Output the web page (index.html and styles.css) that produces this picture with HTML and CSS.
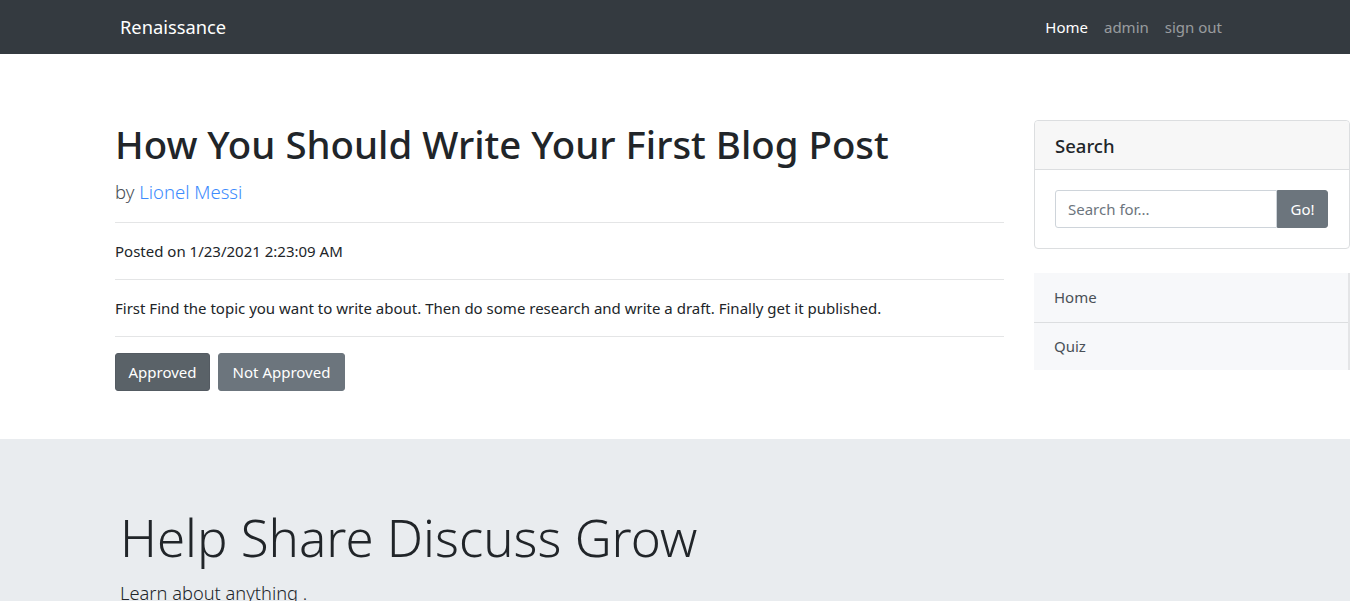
FILE: index.html
```html
<!DOCTYPE html>
<html lang="en">
<head>
<meta charset="utf-8">
<title>Renaissance</title>
<link rel="stylesheet" href="styles.css">
</head>
<body>
<nav class="navbar">
  <div class="nav-inner">
    <a class="brand" href="#">Renaissance</a>
    <ul class="nav-links">
      <li><a class="nav-link active" href="#">Home</a></li>
      <li><a class="nav-link" href="#">admin</a></li>
      <li><a class="nav-link" href="#">sign out</a></li>
    </ul>
  </div>
</nav>

<div class="page">
  <main class="post">
    <h1 class="post-title">How You Should Write Your First Blog Post</h1>
    <p class="lead">by <a href="#">Lionel Messi</a></p>
    <hr>
    <p class="meta">Posted on 1/23/2021 2:23:09 AM</p>
    <hr>
    <p class="body-text">First Find the topic you want to write about. Then do some research and write a draft. Finally get it published.</p>
    <hr>
    <div class="actions">
      <button class="btn btn-dark">Approved</button>
      <button class="btn btn-gray">Not Approved</button>
    </div>
  </main>

  <aside class="sidebar">
    <div class="card">
      <h5 class="card-header">Search</h5>
      <div class="card-body">
        <div class="input-group">
          <input class="search-input" type="text" placeholder="Search for...">
          <button class="btn btn-gray btn-go">Go!</button>
        </div>
      </div>
    </div>
    <div class="list-group">
      <a class="list-item" href="#">Home</a>
      <a class="list-item" href="#">Quiz</a>
    </div>
  </aside>
</div>

<section class="jumbotron">
  <h1 class="display">Help Share Discuss Grow</h1>
  <p class="jumbo-lead">Learn about anything .</p>
</section>
</body>
</html>
```

FILE: styles.css
```css
* { box-sizing: border-box; }
html, body { margin: 0; padding: 0; }
body {
  font-family: "Noto Sans", "Open Sans", sans-serif;
  font-size: 15px;
  color: #212529;
  background: #fff;
  overflow: hidden;
  width: 1350px;
}
a { text-decoration: none; }

.navbar {
  background: #343a40;
  height: 54px;
}
.nav-inner {
  width: 1140px;
  margin: 0 auto;
  padding: 0 15px;
  height: 54px;
  display: flex;
  align-items: center;
  justify-content: space-between;
}
.brand {
  color: #fff;
  font-size: 18.3px;
  line-height: 30px;
}
.nav-links {
  list-style: none;
  margin: 0 8px 0 0;
  padding: 0;
  display: flex;
  gap: 16px;
}
.nav-link {
  color: rgba(255,255,255,.5);
  font-size: 15px;
  line-height: 24px;
}
.nav-link.active { color: #fff; }

.page {
  display: flex;
  gap: 30px;
  padding: 66px 0 48px 115px;
}
.post {
  width: 889px;
  flex: none;
}
.post-title {
  margin: 0;
  font-size: 38.4px;
  font-weight: 500;
  line-height: 48px;
}
.lead {
  margin: 10px 0 0;
  font-size: 18.5px;
  font-weight: 300;
  line-height: 28px;
  color: #495057;
}
.lead a { color: #3d8bfd; }
hr {
  margin: 16px 0 0;
  border: 0;
  border-top: 1px solid #e4e5e6;
}
.meta, .body-text {
  margin: 0;
  padding: 18px 0 18px;
  font-size: 15px;
  line-height: 20px;
}
.body-text + hr, .meta + hr { margin-top: 0; }
.actions {
  display: flex;
  gap: 8px;
  margin-top: 16px;
}
.btn {
  font-family: inherit;
  font-size: 15px;
  color: #fff;
  border: 1px solid transparent;
  border-radius: 3px;
  height: 38px;
  padding: 0 12px;
  line-height: 36px;
  cursor: pointer;
}
.btn-dark { background: #5a6268; border-color: #545b62; width: 95px; }
.btn-gray { background: #6c757d; border-color: #6c757d; width: 127px; }

.sidebar {
  width: 316px;
  flex: none;
}
.card {
  margin-top: 0;
  border: 1px solid #dcdee0;
  border-radius: 4px;
}
.card-header {
  margin: 0;
  height: 49px;
  padding: 0 20px;
  font-size: 18.5px;
  font-weight: 500;
  line-height: 50px;
  background: #f7f7f7;
  border-bottom: 1px solid #dcdee0;
  border-radius: 4px 4px 0 0;
}
.card-body {
  padding: 20px 20px 20px;
}
.input-group {
  display: flex;
}
.search-input {
  width: 222px;
  height: 38px;
  border: 1px solid #ced4da;
  border-radius: 3px 0 0 3px;
  padding: 0 12px;
  font-family: inherit;
  font-size: 15px;
  color: #495057;
  outline: none;
}
.search-input::placeholder { color: #6c757d; }
.btn-go {
  width: 51px;
  padding: 0;
  border-radius: 0 3px 3px 0;
}
.list-group {
  margin-top: 24px;
  display: flex;
  flex-direction: column;
  border-right: 2px solid #e4e5e7;
}
.list-item {
  display: block;
  height: 49px;
  padding: 0 20px;
  line-height: 48px;
  font-size: 15px;
  color: #495057;
  background: #f7f8fa;
}
.list-item + .list-item {
  border-top: 1px solid #dcdee0;
  height: 48px;
  line-height: 47px;
}

.jumbotron {
  background: #e9ecef;
  height: 165px;
  padding: 62px 0 0 120px;
}
.display {
  margin: 0;
  font-size: 51px;
  font-weight: 300;
  line-height: 72px;
}
.jumbo-lead {
  margin: 6px 0 0;
  font-size: 18.3px;
  font-weight: 300;
  line-height: 28px;
}
```
